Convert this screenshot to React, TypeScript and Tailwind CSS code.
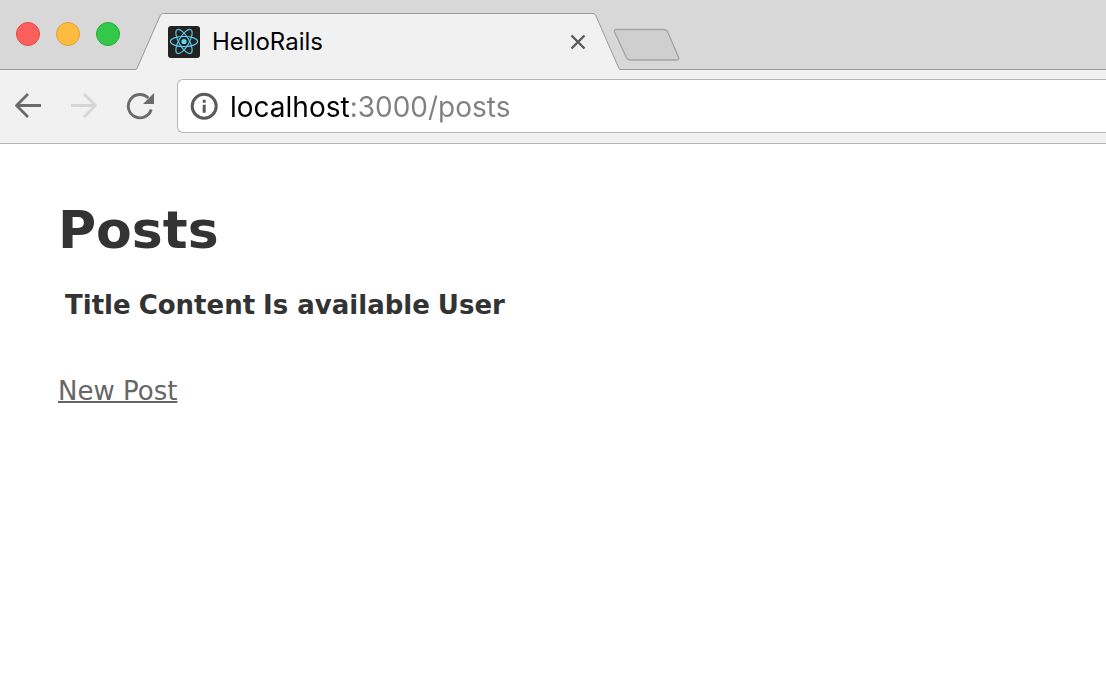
import { useState } from "react";

function TrafficLights() {
  return (
    <div className="flex gap-4 pl-4 pt-[22px]">
      <button type="button" aria-label="Close window" className="size-6 rounded-full border border-[#e04a46] bg-[#fc605c]" />
      <button type="button" aria-label="Minimize window" className="size-6 rounded-full border border-[#dea236] bg-[#fdbc40]" />
      <button type="button" aria-label="Zoom window" className="size-6 rounded-full border border-[#28ab35] bg-[#34c84a]" />
    </div>
  );
}

function ReactLogo() {
  return (
    <svg className="size-8 shrink-0" viewBox="0 0 32 32" aria-hidden="true">
      <rect width="32" height="32" rx="3" fill="#222222" />
      <circle cx="16" cy="15.5" r="2.6" fill="#61dafb" />
      <g fill="none" stroke="#5cc9e6" strokeWidth="1.2">
        <ellipse cx="16" cy="15.5" rx="13.6" ry="5.1" />
        <ellipse cx="16" cy="15.5" rx="13.6" ry="5.1" transform="rotate(60 16 15.5)" />
        <ellipse cx="16" cy="15.5" rx="13.6" ry="5.1" transform="rotate(120 16 15.5)" />
      </g>
    </svg>
  );
}

function TabEdge({ side }: { side: "left" | "right" }) {
  return (
    <svg
      className={side === "left" ? "h-[57px] w-7 shrink-0" : "h-[57px] w-7 shrink-0 -scale-x-100"}
      viewBox="0 0 28 57"
      aria-hidden="true"
    >
      <path d="M0 57V56.5Q.6 56.5 1.2 55L24.2 2.6Q25.2 .5 27.2 .5H28V57Z" fill="#f1f1f1" />
      <path d="M0 56.5Q.6 56.5 1.2 55L24.2 2.6Q25.2 .5 27.2 .5H28" fill="none" stroke="#999999" />
    </svg>
  );
}

function TabStrip() {
  return (
    <div className="flex h-[70px] items-end bg-[#d8d8d8]">
      <div className="h-full w-[136px] shrink-0 border-b border-[#999999]">
        <TrafficLights />
      </div>
      <div className="flex w-[484px] shrink-0">
        <TabEdge side="left" />
        <div className="flex h-[57px] flex-1 items-center border-t border-[#999999] bg-[#f1f1f1] pl-1 pr-1.5">
          <ReactLogo />
          <span className="flex-1 pl-3 text-[24px] leading-8 text-black">HelloRails</span>
          <button type="button" aria-label="Close tab">
            <svg className="size-4" viewBox="0 0 16 16" fill="none" stroke="#5a5a5a" strokeWidth="2.4" aria-hidden="true">
              <path d="M1.5 1.5L14.5 14.5M14.5 1.5L1.5 14.5" />
            </svg>
          </button>
        </div>
        <TabEdge side="right" />
      </div>
      <div className="flex h-full flex-1 items-start border-b border-[#999999]">
        <button type="button" aria-label="New tab" className="-ml-2 mt-7">
          <svg className="h-[33px] w-[68px]" viewBox="0 0 68 33" aria-hidden="true">
            <path
              d="M4.5 1.5H52Q54.5 1.5 55.6 3.8L66.4 29Q67.4 32 65 32H18.5Q15.5 32 14.2 29.3L2.6 4Q1.6 1.5 4.5 1.5Z"
              fill="#cfcfcf"
              stroke="#a3a3a3"
              strokeWidth="1.3"
            />
          </svg>
        </button>
      </div>
    </div>
  );
}

function Toolbar() {
  const [url, setUrl] = useState("localhost:3000/posts");
  return (
    <div className="flex h-[74px] items-center overflow-hidden border-b border-[#b5b5b5] bg-[#f1f1f1] pb-px pl-3.5">
      <div className="flex w-[163px] shrink-0 gap-7">
        <button type="button" aria-label="Back">
          <svg className="size-7" viewBox="0 0 28 28" fill="none" stroke="#6b6b6b" strokeWidth="2.8" strokeLinejoin="round" aria-hidden="true">
            <path d="M27 13.5H3M14 2L2.5 13.5L14 25" />
          </svg>
        </button>
        <button type="button" aria-label="Forward" disabled>
          <svg className="size-7" viewBox="0 0 28 28" fill="none" stroke="#d6d6d6" strokeWidth="2.8" strokeLinejoin="round" aria-hidden="true">
            <path d="M1 13.5H25M14 2L25.5 13.5L14 25" />
          </svg>
        </button>
        <button type="button" aria-label="Reload">
          <svg className="size-7" viewBox="0 0 28 28" aria-hidden="true">
            <path d="M25.2 17.5A11.7 11.7 0 1 1 22.3 5.9" fill="none" stroke="#6b6b6b" strokeWidth="2.9" />
            <path d="M28 1V12H17Z" fill="#6b6b6b" />
          </svg>
        </button>
      </div>
      <div className="flex h-[54px] flex-1 items-center rounded-l-md border border-r-0 border-[#b5b5b5] bg-white pl-3">
        <button type="button" aria-label="View site information">
          <svg className="size-7" viewBox="0 0 28 28" aria-hidden="true">
            <circle cx="14.2" cy="14.2" r="12" fill="none" stroke="#5a5a5a" strokeWidth="3" />
            <path d="M12.7 7.8H15.7V10.8H12.7ZM12.7 12.8H15.7V20.8H12.7Z" fill="#5a5a5a" />
          </svg>
        </button>
        <input
          type="text"
          aria-label="Address"
          spellCheck={false}
          value={url}
          onChange={(event) => setUrl(event.target.value)}
          className="ml-3 h-10 min-w-0 flex-1 bg-[linear-gradient(to_right,#000000_120px,#808080_120px)] bg-clip-text pt-px text-[28px] text-transparent caret-black outline-none"
        />
      </div>
    </div>
  );
}

export default function App() {
  return (
    <div className="min-h-screen bg-white">
      <header className="font-[Inter,sans-serif]">
        <TabStrip />
        <Toolbar />
      </header>
      <main className="px-[58px] pt-14 font-['DejaVu_Sans',sans-serif] text-[26px] leading-9 text-[#333333]">
        <h1 className="text-[52px] font-bold leading-[60px]">Posts</h1>
        <table className="ml-px mt-[21px] border-separate border-spacing-1">
          <thead>
            <tr>
              <th className="p-0.5 font-bold">Title</th>
              <th className="p-0.5 font-bold">Content</th>
              <th className="p-0.5 font-bold">Is available</th>
              <th className="p-0.5 font-bold">User</th>
            </tr>
          </thead>
          <tbody />
        </table>
        <a href="/posts/new" className="mt-11 inline-block text-[#666666] underline decoration-2">
          New Post
        </a>
      </main>
    </div>
  );
}
